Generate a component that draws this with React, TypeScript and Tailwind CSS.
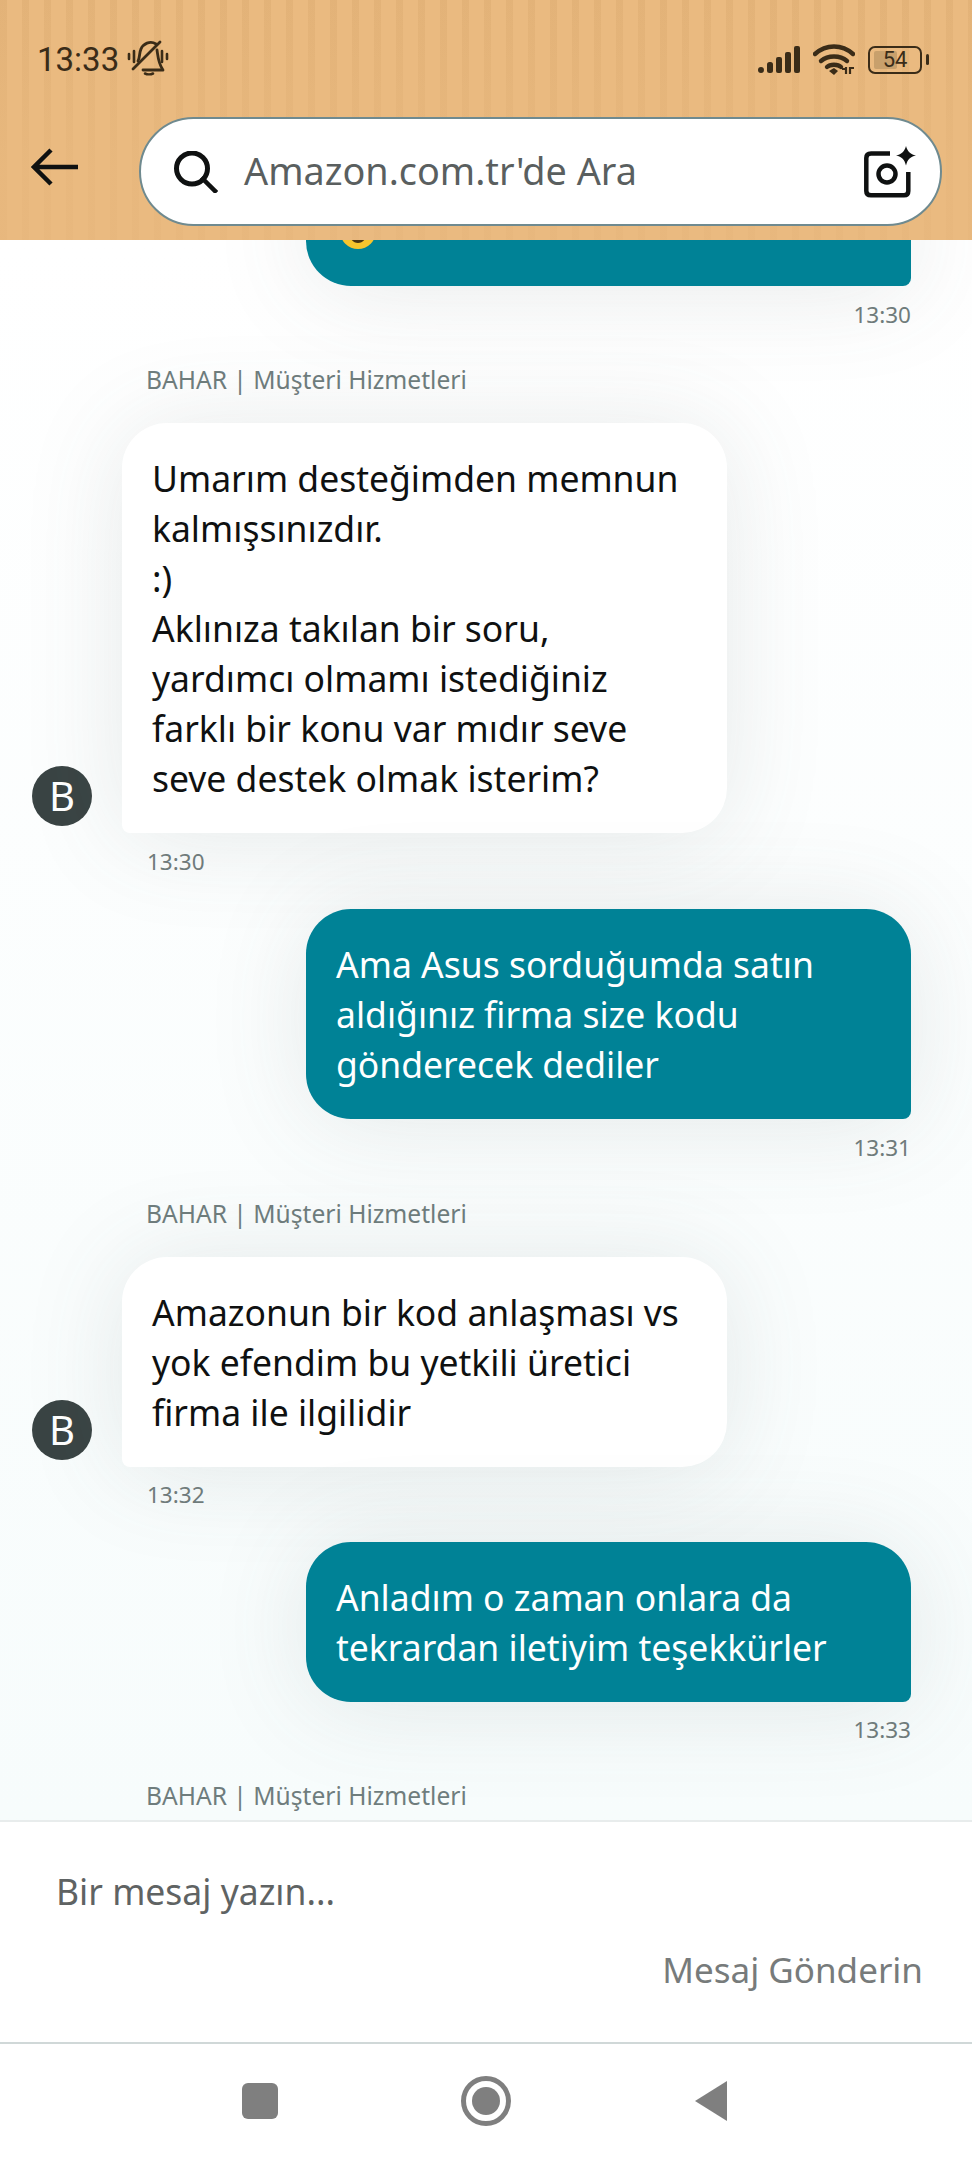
const font = "font-['Noto_Sans','Open_Sans',sans-serif]";

function MutedBell() {
    return (
        <svg width="42" height="36" viewBox="0 0 42 36" fill="none" stroke="#3a2c18" strokeWidth="2.8" strokeLinecap="round" strokeLinejoin="round">
            <path d="M2 14v5M7 11v11M35 11v11M40 14v5" strokeWidth="2.6" />
            <path d="M11 21c2-3 1-8 3-12 2-5 9-9 15-5" />
            <path d="M30 10c1 6 1 13 6 20H16" />
            <path d="M6 29 33 2" />
            <path d="M18 33.500c2 1 6 1 8 0" strokeWidth="2.6" />
        </svg>
    );
}

function Signal() {
    return (
        <svg width="43" height="27" viewBox="0 0 43 27" fill="#3a2c18">
            <rect x="0" y="21" width="6" height="6" rx="3" />
            <rect x="9" y="16" width="6" height="11" rx="2.500" />
            <rect x="18" y="11" width="6" height="16" rx="2" />
            <rect x="27" y="6" width="6" height="21" rx="2" />
            <rect x="36" y="0" width="6" height="27" rx="2" />
        </svg>
    );
}

function Wifi() {
    return (
        <svg width="42" height="31" viewBox="0 0 42 31" fill="none" stroke="#3a2c18" strokeWidth="4.4" strokeLinecap="round">
            <path d="M2 10c11-10 27-10 38 0" />
            <path d="M8 17c7-6 19-6 26 0" />
            <path d="M14 23c3-3 11-3 14 0" />
            <path d="M16 27l5-3 4 3-4 4z" fill="#3a2c18" stroke="none" />
            <path d="M29 25h3M33 23v7M37 23v7M37 24h4" strokeWidth="2.2" strokeLinecap="butt" />
        </svg>
    );
}

function Battery() {
    return (
        <div className="flex items-center gap-[4px]">
            <div className="relative flex h-[28px] w-[54px] items-center justify-center rounded-[7px] border-2 border-[#3a2c18]">
                <div className="absolute bottom-[3px] left-[4px] top-[3px] w-[23px] rounded-[2px] bg-[#c8a06c]" />
                <span className="relative font-['Roboto',sans-serif] text-[22px] leading-none text-[#3a2c18]">54</span>
            </div>
            <div className="h-[11px] w-[3px] rounded-[2px] bg-[#3a2c18]" />
        </div>
    );
}

function SearchIcon() {
    return (
        <svg width="44" height="42" viewBox="0 0 44 42" fill="none" stroke="#0f1111" strokeWidth="5">
            <circle cx="18" cy="17.500" r="15.500" />
            <path d="M29 28 41 40" strokeLinecap="square" strokeWidth="4.500" />
        </svg>
    );
}

function CameraIcon() {
    return (
        <svg width="54" height="52" viewBox="0 0 54 52" fill="none" stroke="#0f1111" strokeWidth="4.500" strokeLinejoin="round">
            <path d="M26 7.500H7Q2.300 7.500 2.300 12V45Q2.300 49.300 7 49.300H40Q44.300 49.300 44.300 45V26" />
            <circle cx="23" cy="28" r="8.500" />
            <path d="M42 0c1.500 5.500 4 8 10 9.500-6 1.500-8.500 4-10 10-1.500-6-4-8.500-10-10 6-1.500 8.500-4 10-9.500z" fill="#0f1111" stroke="none" />
        </svg>
    );
}

function Avatar() {
    return (
        <div className="mb-[7px] flex h-[60px] w-[60px] shrink-0 items-center justify-center rounded-full bg-[#3a4444] text-[40px] leading-none text-white">
            B
        </div>
    );
}

function Sender({ className }: { className: string }) {
    return <div className={`ml-[146px] h-[28px] text-[24.600px] leading-[28px] text-[#6f7d7d] ${className}`}>BAHAR | Müşteri Hizmetleri</div>;
}

function Incoming({ lines, time, timeGap }: { lines: string[]; time: string; timeGap: string }) {
    return (
        <div>
            <div className="ml-[32px] mt-[29px] flex items-end gap-[30px]">
                <Avatar />
                <div className="w-[605px] rounded-[45px] rounded-bl-[8px] bg-white px-[30px] py-[30px] text-[35.500px] leading-[50px] text-[#0f1111] shadow-[0_4px_100px_rgba(80,95,95,0.13)]">
                    {lines.map(l => (
                        <div key={l} className="whitespace-nowrap">{l}</div>
                    ))}
                </div>
            </div>
            <div className={`ml-[147px] h-[28px] text-[22.500px] leading-[30px] text-[#6f7b7b] ${timeGap}`}>{time}</div>
        </div>
    );
}

function Outgoing({ lines, time, gap, timeGap }: { lines: React.ReactNode[]; time: string; gap: string; timeGap: string }) {
    return (
        <div className={gap}>
            <div className="ml-[306px] w-[605px] rounded-[45px] rounded-br-[8px] bg-[#008296] px-[30px] py-[30px] text-[35.500px] leading-[50px] text-white shadow-[0_4px_100px_rgba(80,95,95,0.13)]">
                {lines.map((l, i) => (
                    <div key={i} className="whitespace-nowrap">{l}</div>
                ))}
            </div>
            <div className={`mr-[61px] h-[28px] text-right text-[22.500px] leading-[30px] text-[#6f7b7b] ${timeGap}`}>{time}</div>
        </div>
    );
}

export default function App() {
    return (
        <div className={`flex h-[2160px] w-[972px] flex-col overflow-hidden bg-white ${font}`}>
            <header className="z-10 h-[240px] shrink-0 bg-[#eaba80] bg-[linear-gradient(180deg,rgba(234,186,128,0)_0,rgba(234,186,128,0.7)_70%),repeating-linear-gradient(90deg,rgba(190,140,80,0.16)_0,rgba(190,140,80,0.16)_7px,transparent_7px,transparent_22px)]">
                <div className="flex h-[117px] items-start pl-[37px] pr-[43px] pt-[41px]">
                    <span className="font-['Roboto',sans-serif] text-[33px] leading-[38px] text-[#3a2c18]">13:33</span>
                    <div className="ml-[8px] mt-[-1px]"><MutedBell /></div>
                    <div className="ml-auto mt-[3px] flex items-center gap-[12px]">
                        <Signal />
                        <Wifi />
                        <div className="ml-[1px]"><Battery /></div>
                    </div>
                </div>
                <div className="flex items-center pl-[31px] pr-[30px]">
                    <svg width="48" height="38" viewBox="0 0 48 38" fill="none" stroke="#0f1111" strokeWidth="4.500" className="mb-[10px]">
                        <path d="M47 19H4M20 2 3 19l17 17" />
                    </svg>
                    <div className="ml-[60px] flex h-[109px] flex-1 items-center rounded-full border-2 border-[#6f8a8f] bg-white pl-[33px] pr-[22px]">
                        <SearchIcon />
                        <span className="mb-[2px] ml-[26px] text-[37.800px] leading-none text-[#5a5f5f]">Amazon.com.tr'de Ara</span>
                        <div className="ml-auto"><CameraIcon /></div>
                    </div>
                </div>
            </header>

            <main className="flex min-h-0 flex-1 flex-col justify-end overflow-hidden bg-gradient-to-b from-white to-[#f7fcfc] pb-[10px]">
                <Outgoing
                    gap=""
                    timeGap="mt-[14px]"
                    time="13:30"
                    lines={[
                        <svg width="36" height="50" viewBox="0 0 36 50" key="emoji" className="ml-[4px]">
                            <circle cx="18" cy="25" r="18" fill="#f7c52d" />
                            <path d="M8 20c6 3 14 3 20 0 0 11-4 17-10 17S8 31 8 20z" fill="#4a3512" />
                        </svg>,
                    ]}
                />
                <Sender className="mt-[38px]" />
                <Incoming
                    time="13:30"
                    timeGap="mt-[14px]"
                    lines={[
                        "Umarım desteğimden memnun",
                        "kalmışsınızdır.",
                        ":)",
                        "Aklınıza takılan bir soru,",
                        "yardımcı olmamı istediğiniz",
                        "farklı bir konu var mıdır seve",
                        "seve destek olmak isterim?",
                    ]}
                />
                <Outgoing
                    gap="mt-[34px]"
                    timeGap="mt-[14px]"
                    time="13:31"
                    lines={["Ama Asus sorduğumda satın", "aldığınız firma size kodu", "gönderecek dediler"]}
                />
                <Sender className="mt-[39px]" />
                <Incoming
                    time="13:32"
                    timeGap="mt-[13px]"
                    lines={["Amazonun bir kod anlaşması vs", "yok efendim bu yetkili üretici", "firma ile ilgilidir"]}
                />
                <Outgoing
                    gap="mt-[34px]"
                    timeGap="mt-[13px]"
                    time="13:33"
                    lines={["Anladım o zaman onlara da", "tekrardan iletiyim teşekkürler"]}
                />
                <Sender className="mt-[39px]" />
            </main>

            <section className="h-[224px] shrink-0 border-y-2 border-t-[#e8ecec] border-b-[#d0d8d8] bg-white">
                <div className="pl-[56px] pt-[47px] text-[35.500px] leading-[44px] text-[#5f6363]">Bir mesaj yazın...</div>
                <div className="pr-[49px] pt-[35px] text-right text-[35px] leading-[44px] text-[#777b7b]">Mesaj Gönderin</div>
            </section>

            <nav className="flex h-[116px] shrink-0 items-center justify-center gap-[183px] pb-[2px] pr-[3px]">
                <div className="h-[36px] w-[36px] rounded-[6px] bg-[#7f7f7f]" />
                <div className="flex h-[50px] w-[50px] items-center justify-center rounded-full border-[5px] border-[#7f7f7f]">
                    <div className="h-[28px] w-[28px] rounded-full bg-[#7f7f7f]" />
                </div>
                <svg width="34" height="42" viewBox="0 0 34 42" fill="#7f7f7f">
                    <path d="M33 1v40L1 21z" />
                </svg>
            </nav>
        </div>
    );
}
